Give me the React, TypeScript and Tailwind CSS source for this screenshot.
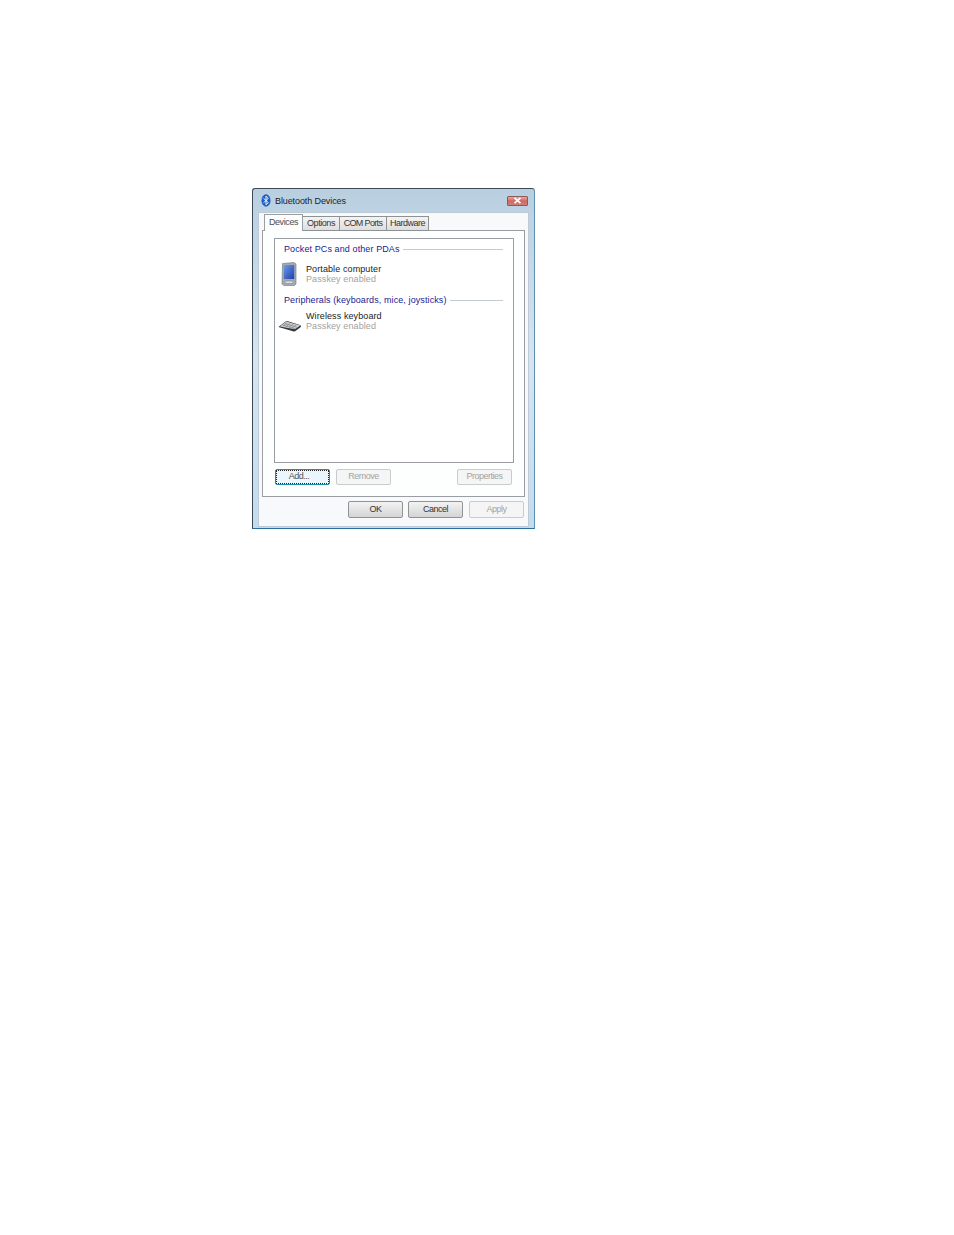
const FONT = "font-['Liberation_Sans',Arial,sans-serif]";

function BluetoothIcon() {
  return (
    <svg width="10" height="13" viewBox="0 0 11 14" className="shrink-0">
      <ellipse cx="5.5" cy="7" rx="5" ry="6.8" fill="#1f5fc4" />
      <path d="M2.8 4.6 8 9.3 5.5 11.8V2.2L8 4.7 2.8 9.4" fill="none" stroke="#fff" strokeWidth="1" />
    </svg>
  );
}

function CloseButton() {
  return (
    <div className="flex h-[10px] w-[21px] items-center justify-center rounded-[1px] border border-[#8a5a60] bg-gradient-to-b from-[#e6a8a0] via-[#d2675c] to-[#cf7f78]">
      <svg width="9" height="7" viewBox="0 0 9 7">
        <path d="M1.5 .8 7.5 6.2M7.5 .8 1.5 6.2" stroke="#fff" strokeWidth="1.7" />
      </svg>
    </div>
  );
}

function PdaIcon() {
  return (
    <svg width="16" height="24" viewBox="0 0 16 24" className="shrink-0">
      <defs>
        <linearGradient id="pda-screen" x1="0" y1="0" x2="1" y2="1">
          <stop offset="0" stopColor="#6f9ce6" />
          <stop offset="1" stopColor="#1c3fae" />
        </linearGradient>
      </defs>
      <path d="M1.5 1.5 13 .5 15 2v20l-1.5 1.5H3L1 22z" fill="#a4acb3" stroke="#6d757d" strokeWidth=".6" />
      <rect x="2.8" y="3" width="10.4" height="14" fill="url(#pda-screen)" />
      <rect x="4" y="19" width="8" height="2.6" rx="1" fill="#d8dcdf" stroke="#70787f" strokeWidth=".5" />
    </svg>
  );
}

function KeyboardIcon() {
  return (
    <svg width="24" height="12" viewBox="0 0 24 12" className="shrink-0">
      <path d="M.5 7 7.5 1.5Q8.5 .8 10 1.2L22 5Q24 6 22.5 7.2L17.5 11Q16.5 11.8 15 11.2z" fill="#33373a" />
      <path d="M2 6.4 8.2 1.4 22.4 5.6 16.8 9.2z" fill="#cdd0d2" />
      <path d="M5 6.2 9 2.8M8 6.8 12 3.4M11 7.4 15 4.2M14 8 18 5M7 3.6 19 7.2M5 5.2 17 8.6" stroke="#7d8286" strokeWidth=".7" fill="none" />
    </svg>
  );
}

function Tab({ label, active, className }: { label: string; active?: boolean; className?: string }) {
  if (active) {
    return (
      <div className="relative z-10 flex h-[17px] w-[39px] items-start justify-center border border-b-0 border-[#9a9ea2] bg-[#fcfdfd] pt-px tracking-[-0.4px] text-[#4a4f55]">
        {label}
      </div>
    );
  }
  return (
    <div className={`-ml-px mt-[2px] flex h-[15px] items-center justify-center whitespace-nowrap border border-[#8d9296] bg-gradient-to-b from-[#f4f4f4] to-[#dedede] text-[#333] ${className}`}>
      {label}
    </div>
  );
}

function Button({ label, disabled, focused, className }: { label: string; disabled?: boolean; focused?: boolean; className: string }) {
  const look = focused
    ? "border-[#1f8fa8] bg-[#eaf6fb] pr-[7px] text-[#555] outline-1 -outline-offset-2 outline-dotted outline-[#222]"
    : disabled
      ? "border-[#c9cbcc] bg-[#f5f5f5] text-[#a3a3a3]"
      : "border-[#8f9396] bg-gradient-to-b from-[#f3f3f3] to-[#d4d4d4] text-[#333]";
  return (
    <div className={`flex w-[55px] items-center justify-center rounded-[2px] border tracking-[-0.5px] ${look} ${className}`}>
      {label}
    </div>
  );
}

function GroupHeader({ label, className }: { label: string; className: string }) {
  return (
    <div className={`flex items-center gap-[3px] pl-[9px] pr-[10px] text-[#1a1a90] ${className}`}>
      <span className="whitespace-nowrap">{label}</span>
      <div className="h-px flex-1 bg-[#c4cbd0]" />
    </div>
  );
}

function Device({ icon, name, className, iconClass }: { icon: React.ReactNode; name: string; className: string; iconClass: string }) {
  return (
    <div className={`flex ${className}`}>
      <div className={`flex w-[31px] ${iconClass}`}>{icon}</div>
      <div className="leading-[10px]">
        <div className="text-[#222]">{name}</div>
        <div className="text-[#a2a2a2]">Passkey enabled</div>
      </div>
    </div>
  );
}

export default function App() {
  return (
    <div className={`min-h-[1235px] bg-white pl-[252px] pt-[188px] text-[9px] tracking-[0.1px] ${FONT}`}>
      <div className="flex h-[341px] w-[283px] flex-col rounded-t-[3px] border border-[#3c4a55] border-b-[#2a6f9e] border-r-[#5e8fb0] bg-gradient-to-b from-[#b9cfe0] via-[#d6e5f0] to-[#c2dcee]">
        {/* title bar */}
        <div className="flex h-[23px] shrink-0 items-center pl-[8px] pr-[6px]">
          <BluetoothIcon />
          <span className="ml-[4px] mt-[2px] flex-1 tracking-[-0.1px] text-[#222]">Bluetooth Devices</span>
          <CloseButton />
        </div>
        {/* client area */}
        <div className="mx-[5px] flex flex-1 flex-col border border-[#bccbd7] bg-[#f8f9fa]">
          <div className="mx-[3px] flex-1 pt-px">
            <div className="-mb-px flex pl-[2px]">
              <Tab label="Devices" active />
              <Tab label="Options" className="w-[38px] tracking-[-0.45px]" />
              <Tab label="COM Ports" className="w-[48px] tracking-[-0.65px]" />
              <Tab label="Hardware" className="w-[43px] tracking-[-0.5px]" />
            </div>
            <div className="flex h-[267px] flex-col border border-[#9a9ea2] bg-[#fdfefe] pl-[11px] pr-[10px] pt-[7px]">
              <div className="h-[225px] border border-[#9a9ea2] bg-white">
                <GroupHeader label="Pocket PCs and other PDAs" className="mt-[4px]" />
                <Device icon={<PdaIcon />} iconClass="items-center pl-[6px]" name="Portable computer" className="mt-[5px] items-center" />
                <GroupHeader label="Peripherals (keyboards, mice, joysticks)" className="mt-[8px]" />
                <Device icon={<KeyboardIcon />} iconClass="mt-[9px] pl-[3px]" name="Wireless keyboard" className="mt-[4px] items-start" />
              </div>
              <div className="mt-[6px] flex pl-px">
                <Button label="Add..." focused className="h-[16px]" />
                <Button label="Remove" disabled className="ml-[6px] h-[16px]" />
                <Button label="Properties" disabled className="ml-auto mr-[2px] h-[16px]" />
              </div>
            </div>
          </div>
          <div className="flex justify-end gap-[5px] pb-[8px] pr-[4px] pt-[4px]">
            <Button label="OK" className="h-[17px]" />
            <Button label="Cancel" className="h-[17px]" />
            <Button label="Apply" disabled className="ml-px h-[17px]" />
          </div>
        </div>
        <div className="h-[4px] shrink-0" />
      </div>
    </div>
  );
}
